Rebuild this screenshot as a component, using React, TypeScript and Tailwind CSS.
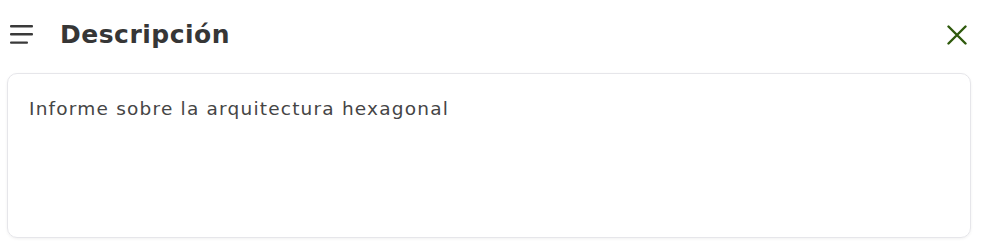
import React from 'react';

export default function App() {
  return (
    <div className="w-[983px] h-[248px] bg-white" style={{ fontFamily: '"DejaVu Sans", "Open Sans", sans-serif' }}>
      <div className="flex items-center justify-between h-[70px] pl-[10px] pr-[16px]">
        <div className="flex items-center gap-[26px]">
          <svg width="24" height="20" viewBox="0 0 24 20" className="text-[#3a3a3a]">
            <rect x="0" y="0" width="23" height="2.4" rx="1" fill="currentColor" />
            <rect x="0" y="8" width="23" height="2.4" rx="1" fill="currentColor" />
            <rect x="0" y="16.4" width="18" height="2.4" rx="1" fill="currentColor" />
          </svg>
          <h1 className="text-[25px] font-bold text-[#363636] tracking-[0.5px]">Descripción</h1>
        </div>
        <svg width="20" height="20" viewBox="0 0 20 20" className="text-[#2f5a0c]">
          <path d="M1.5 1.5 L18.5 18.5 M18.5 1.5 L1.5 18.5" stroke="currentColor" strokeWidth="2.4" strokeLinecap="round" />
        </svg>
      </div>
      <div className="mt-[3px] ml-[7px] mr-[12px] h-[165px] rounded-[10px] border border-[#e6e6ea] shadow-[0_1px_3px_rgba(0,0,0,0.06)] px-[21px] pt-[21px]">
        <p className="text-[18.5px] text-[#454545] tracking-[1.2px]">Informe sobre la arquitectura hexagonal</p>
      </div>
    </div>
  );
}
